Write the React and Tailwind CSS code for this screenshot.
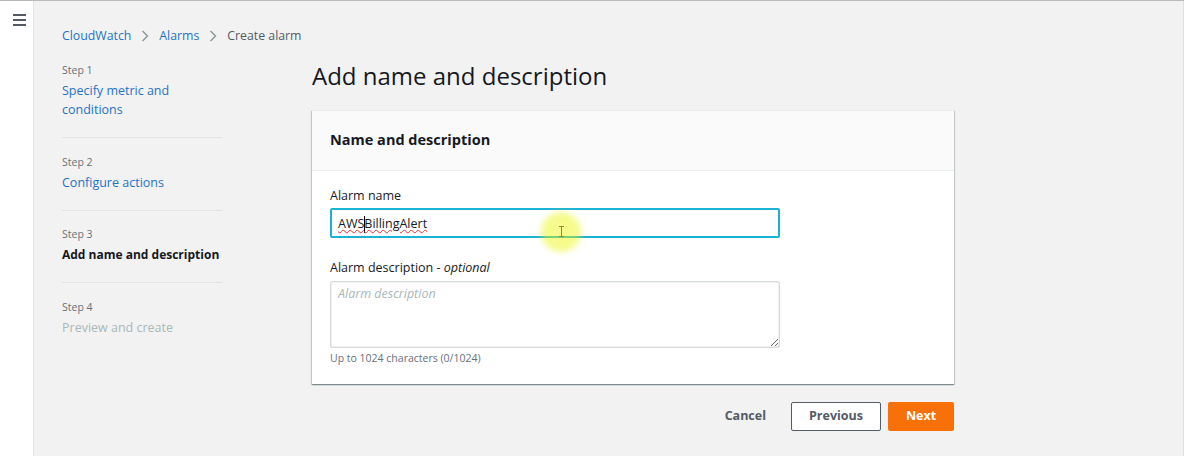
import React from "react";

const Chevron = () => (
  <svg width="8" height="12" viewBox="0 0 8 12" className="mx-[10px]">
    <path d="M1.5 1 L6.5 6 L1.5 11" fill="none" stroke="#879596" strokeWidth="1.4" />
  </svg>
);

function Step({ n, title, kind, last }) {
  const color =
    kind === "link"
      ? "text-[#1f73c4] text-[12.5px]"
      : kind === "active"
      ? "text-[#16191f] font-bold text-[12px] whitespace-nowrap"
      : "text-[#aab7b8] text-[12.5px]";
  return (
    <div className={`${n === 1 ? "pt-[2px]" : "pt-[15.5px]"} ${last ? "" : "pb-[18px] border-b border-[#e1e4e4]"}`}>
      <div className="text-[10.5px] leading-[16px] text-[#687078]">Step {n}</div>
      <div className={`mt-[3px] leading-[19px] ${color}`}>{title}</div>
    </div>
  );
}

export default function App() {
  return (
    <div
      className="flex h-[456px] w-full border-t border-[#b9b9bc] overflow-hidden"
      style={{ fontFamily: '"Open Sans", sans-serif' }}
    >
      <div className="w-[34px] shrink-0 bg-white border-r border-[#e4e4e4] pt-[13px] pl-[13px]">
        <div className="flex flex-col gap-[3px] w-[13px]">
          <div className="h-[2px] bg-[#545b64]" />
          <div className="h-[2px] bg-[#545b64]" />
          <div className="h-[2px] bg-[#545b64]" />
        </div>
      </div>
      <div className="flex-1 bg-[#f2f2f2] pl-[28px] pt-[25px] border-r border-[#e0e0e0]">
        <div className="flex items-center h-[20px] text-[12.3px]">
          <span className="text-[#1f73c4]">CloudWatch</span>
          <Chevron />
          <span className="text-[#1f73c4]">Alarms</span>
          <Chevron />
          <span className="text-[#545b64]">Create alarm</span>
        </div>
        <div className="flex mt-[14px]">
          <div className="w-[160px] shrink-0">
            <Step n={1} title={<>Specify metric and<br />conditions</>} kind="link" />
            <Step n={2} title="Configure actions" kind="link" />
            <Step n={3} title="Add name and description" kind="active" />
            <Step n={4} title="Preview and create" kind="disabled" last />
          </div>
          <div className="ml-[90px] w-[642px]">
            <h1 className="text-[24px] leading-[32px] text-[#16191f] font-normal">Add name and description</h1>
            <div className="mt-[18px] bg-white shadow-[0_1px_1px_0_rgba(0,28,36,0.3),1px_1px_1px_0_rgba(0,28,36,0.15),-1px_1px_1px_0_rgba(0,28,36,0.15)] border-t border-[#eaeded]">
              <div className="h-[60px] bg-[#fafafa] border-b border-[#eaeded] px-[18px] pb-[2px] flex items-center">
                <span className="text-[14.5px] font-bold text-[#16191f]">Name and description</span>
              </div>
              <div className="px-[18px] pt-[15px] pb-[18px]">
                <div className="text-[12.5px] leading-[20px] text-[#16191f]">Alarm name</div>
                <div className="relative mt-[2px] w-[450px] h-[30px] border-2 border-[#1bb3d3] rounded-[2px] flex items-center pl-[6px] pt-[3px] text-[12.5px] text-[#16191f]">
                  <span className="underline decoration-wavy decoration-[#e0313b] decoration-1 underline-offset-[1px]">
                    AWS<span className="inline-block w-[1.5px] h-[17px] bg-black align-middle -mx-[0.75px]" />BillingAlert
                  </span>
                  <div className="absolute left-[209px] top-[2px] w-[40px] h-[40px] rounded-full bg-[#ecf700]/45 blur-[3px]" />
                  <svg className="absolute left-[226px] top-[16px]" width="7" height="11" viewBox="0 0 7 11">
                    <path d="M1 0.5 H6 M3.5 0.5 V10.5 M1 10.5 H6" stroke="#8f8f30" strokeWidth="1" fill="none" />
                  </svg>
                </div>
                <div className="mt-[20px] text-[12.5px] leading-[20px] text-[#16191f]">
                  Alarm description - <i>optional</i>
                </div>
                <textarea
                  placeholder="Alarm description"
                  className="block mt-[3px] w-[450px] h-[67px] border border-[#d5dbdb] shadow-[inset_0_0_0_0.5px_#e3e3e3] rounded-[2px] px-[7px] py-[3px] text-[12.5px] placeholder:italic placeholder:text-[#aab7b8] outline-none resize"
                  style={{ fontFamily: '"Open Sans", sans-serif' }}
                />
                <div className="mt-[2px] text-[10.5px] leading-[16px] text-[#687078]">Up to 1024 characters (0/1024)</div>
              </div>
            </div>
            <div className="mt-[18px] flex justify-end items-center">
              <span className="text-[12.5px] font-bold text-[#545b64] mr-[25px]">Cancel</span>
              <button className="w-[90px] h-[29px] bg-white border border-[#545b64] rounded-[2px] text-[12.5px] font-bold text-[#545b64]">
                Previous
              </button>
              <button className="ml-[7px] w-[66px] h-[29px] bg-[#f77008] rounded-[2px] text-[12.5px] font-bold text-white">
                Next
              </button>
            </div>
          </div>
        </div>
      </div>
    </div>
  );
}
